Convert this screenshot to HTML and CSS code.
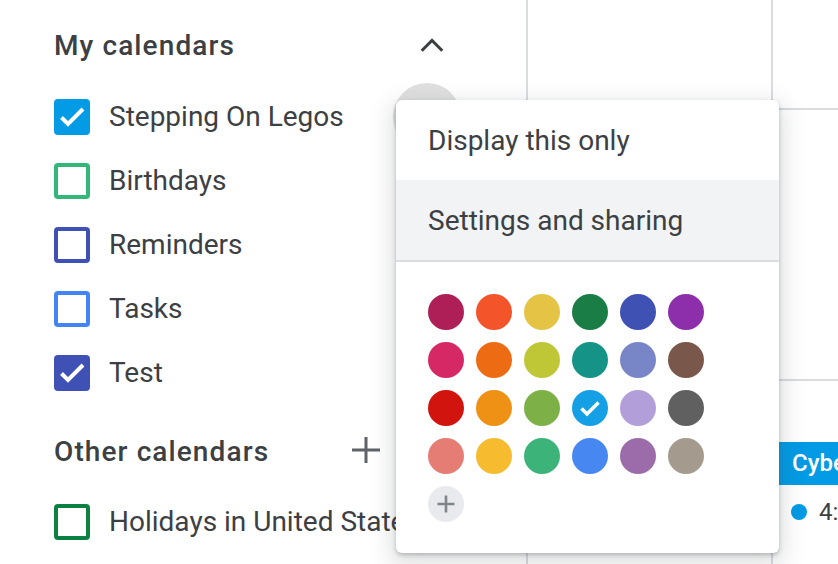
FILE: index.html
```html
<!DOCTYPE html>
<html lang="en">
<head>
<meta charset="utf-8">
<title>Calendars</title>
<link rel="stylesheet" href="styles.css">
</head>
<body>
<div class="app">
  <aside class="sidebar">
    <div class="section-head">
      <span class="section-title">My calendars</span>
      <span class="icon-btn">
        <svg class="chevron" width="26" height="16" viewBox="0 0 26 16"><polyline points="2.7,12.7 13,2.4 23.3,12.7" fill="none" stroke="#3c4043" stroke-width="3"/></svg>
      </span>
    </div>
    <ul class="cal-list">
      <li class="cal-item">
        <span class="cb checked c-peacock"><svg width="36" height="36" viewBox="0 0 36 36"><polyline points="7.5,18.5 14,25 29,10" fill="none" stroke="#fff" stroke-width="4"/></svg></span>
        <span class="label">Stepping On Legos</span>
        <span class="hover-circle"></span>
      </li>
      <li class="cal-item">
        <span class="cb c-sage"></span>
        <span class="label">Birthdays</span>
      </li>
      <li class="cal-item">
        <span class="cb c-blueberry"></span>
        <span class="label">Reminders</span>
      </li>
      <li class="cal-item">
        <span class="cb c-cobalt"></span>
        <span class="label">Tasks</span>
      </li>
      <li class="cal-item">
        <span class="cb checked c-blueberry"><svg width="36" height="36" viewBox="0 0 36 36"><polyline points="7.5,18.5 14,25 29,10" fill="none" stroke="#fff" stroke-width="4"/></svg></span>
        <span class="label">Test</span>
      </li>
    </ul>
    <div class="section-head other">
      <span class="section-title">Other calendars</span>
      <span class="icon-btn">
        <svg class="plus" width="28" height="28" viewBox="0 0 28 28"><path d="M0 14H28M14 1V27" fill="none" stroke="#5f6368" stroke-width="3"/></svg>
      </span>
      <span class="icon-btn">
        <svg class="chevron" width="26" height="16" viewBox="0 0 26 16"><polyline points="2.7,12.7 13,2.4 23.3,12.7" fill="none" stroke="#3c4043" stroke-width="3"/></svg>
      </span>
    </div>
    <ul class="cal-list other-list">
      <li class="cal-item">
        <span class="cb c-basil"></span>
        <span class="label">Holidays in United States</span>
      </li>
    </ul>
  </aside>

  <main class="grid">
    <div class="cell"></div>
    <div class="cell"></div>
    <div class="cell"></div>
    <div class="cell"></div>
    <div class="cell last"></div>
    <div class="cell last events">
      <div class="chip">Cyber Monday</div>
      <div class="timed"><span class="dot"></span><span class="time">4:00pm Sale</span></div>
    </div>
  </main>

  <div class="menu">
    <div class="menu-item">Display this only</div>
    <div class="menu-item active">Settings and sharing</div>
    <div class="menu-divider"></div>
    <div class="swatches">
      <span class="sw s-radicchio"></span>
      <span class="sw s-tangerine"></span>
      <span class="sw s-citron"></span>
      <span class="sw s-basil"></span>
      <span class="sw s-blueberry"></span>
      <span class="sw s-grape"></span>
      <span class="sw s-cherry"></span>
      <span class="sw s-pumpkin"></span>
      <span class="sw s-avocado"></span>
      <span class="sw s-eucalyptus"></span>
      <span class="sw s-lavender"></span>
      <span class="sw s-cocoa"></span>
      <span class="sw s-tomato"></span>
      <span class="sw s-mango"></span>
      <span class="sw s-pistachio"></span>
      <span class="sw s-peacock"><svg width="36" height="36" viewBox="0 0 36 36"><polyline points="9.5,18.5 15,24 26.5,12.5" fill="none" stroke="#fff" stroke-width="3.5"/></svg></span>
      <span class="sw s-wisteria"></span>
      <span class="sw s-graphite"></span>
      <span class="sw s-flamingo"></span>
      <span class="sw s-banana"></span>
      <span class="sw s-sage"></span>
      <span class="sw s-cobalt"></span>
      <span class="sw s-amethyst"></span>
      <span class="sw s-birch"></span>
      <span class="sw sw-add"><svg width="20" height="20" viewBox="0 0 20 20"><path d="M1.5 10H18.5M10 1.5V18.5" fill="none" stroke="#80868b" stroke-width="2.6"/></svg></span>
    </div>
  </div>
</div>
</body>
</html>
```

FILE: styles.css
```css
html, body {
  margin: 0;
  padding: 0;
}

body {
  width: 838px;
  height: 564px;
  overflow: hidden;
  background: #fff;
  color: #3c4043;
  font-family: Roboto, "Liberation Sans", Arial, sans-serif;
}

.app {
  position: relative;
  display: flex;
  width: 838px;
  height: 564px;
}

/* Sidebar */
.sidebar {
  flex: none;
  width: 526px;
  box-sizing: border-box;
  padding: 28px 0 0 54px;
}

.section-head {
  display: flex;
  align-items: center;
  width: 402px;
  height: 36px;
}

.section-head.other {
  margin-top: 29px;
  gap: 18px;
}

.section-title {
  flex: 1;
  font-size: 28px;
  font-weight: 500;
  line-height: 36px;
  letter-spacing: 1.1px;
  white-space: nowrap;
}

.icon-btn {
  flex: none;
  width: 48px;
  height: 36px;
  display: flex;
  align-items: center;
  justify-content: center;
}

.chevron {
  display: block;
  margin-bottom: 1px;
}

.plus {
  display: block;
  margin-bottom: 4px;
}

.cal-list {
  list-style: none;
  margin: 21px 0 0;
  padding: 0;
}

.cal-list.other-list {
  margin-top: 20px;
}

.cal-item {
  position: relative;
  display: flex;
  align-items: center;
  gap: 19px;
  height: 64px;
}

.label {
  font-size: 28px;
  line-height: 36px;
  white-space: nowrap;
}

.cb {
  flex: none;
  width: 36px;
  height: 36px;
  box-sizing: border-box;
  border: 4px solid var(--c);
  border-radius: 4px;
}

.cb.checked {
  background: var(--c);
}

.cb svg {
  display: block;
  margin: -4px;
}

.c-peacock { --c: #039be5; }
.c-sage { --c: #33b679; }
.c-blueberry { --c: #3f51b5; }
.c-cobalt { --c: #4285f4; }
.c-basil { --c: #0b8043; }

.hover-circle {
  position: absolute;
  left: 339px;
  top: -2px;
  width: 68px;
  height: 68px;
  border-radius: 50%;
  background: #e0e0e0;
}

/* Calendar grid */
.grid {
  flex: 1;
  display: grid;
  grid-template-columns: 245px 1fr;
  grid-template-rows: 110px 271px 1fr;
}

.cell {
  border-left: 2px solid #dadce0;
  border-bottom: 2px solid #dadce0;
  min-width: 0;
}

.cell.last {
  border-bottom: none;
}

.events {
  padding-top: 61px;
  overflow: hidden;
}

.chip {
  margin-left: 2px;
  height: 43px;
  padding-left: 17px;
  background: #039be5;
  color: #fff;
  font-size: 24px;
  font-weight: 500;
  line-height: 43px;
  white-space: nowrap;
  overflow: hidden;
  border-radius: 4px 0 0 4px;
}

.timed {
  display: flex;
  align-items: center;
  gap: 12px;
  height: 44px;
  margin-top: 5px;
  padding-left: 18px;
  font-size: 24px;
  white-space: nowrap;
  overflow: hidden;
}

.dot {
  flex: none;
  width: 16px;
  height: 16px;
  border-radius: 50%;
  background: #039be5;
}

/* Menu */
.menu {
  position: absolute;
  left: 396px;
  top: 100px;
  width: 383px;
  height: 453px;
  background: #fff;
  border-radius: 6px;
  box-shadow: 0 2px 4px rgba(60, 64, 67, 0.3), 0 8px 22px 6px rgba(60, 64, 67, 0.15);
}

.menu-item {
  display: flex;
  align-items: center;
  height: 80px;
  padding-left: 32px;
  font-size: 28px;
  white-space: nowrap;
}

.menu-item.active {
  background: #f1f3f4;
}

.menu-divider {
  height: 2px;
  background: #dadce0;
}

.swatches {
  display: grid;
  grid-template-columns: repeat(6, 36px);
  grid-auto-rows: 36px;
  gap: 12px;
  padding: 32px 0 0 32px;
}

.sw {
  display: block;
  width: 36px;
  height: 36px;
  border-radius: 50%;
}

.sw svg {
  display: block;
}

.sw-add {
  display: flex;
  align-items: center;
  justify-content: center;
  background: #e8eaed;
}

.s-radicchio { background: #ad1f56; }
.s-tangerine { background: #f4542a; }
.s-citron { background: #e4c345; }
.s-basil { background: #1b7d46; }
.s-blueberry { background: #3f51b3; }
.s-grape { background: #8d2faa; }
.s-cherry { background: #d62864; }
.s-pumpkin { background: #ed6c13; }
.s-avocado { background: #c0c737; }
.s-eucalyptus { background: #169387; }
.s-lavender { background: #7886c7; }
.s-cocoa { background: #79574a; }
.s-tomato { background: #d1140e; }
.s-mango { background: #ef9114; }
.s-pistachio { background: #7db046; }
.s-peacock { background: #159fe4; }
.s-wisteria { background: #b29ed9; }
.s-graphite { background: #606060; }
.s-flamingo { background: #e57d74; }
.s-banana { background: #f6bb2f; }
.s-sage { background: #3cb479; }
.s-cobalt { background: #4787f1; }
.s-amethyst { background: #9c6caa; }
.s-birch { background: #a49a8e; }
```
